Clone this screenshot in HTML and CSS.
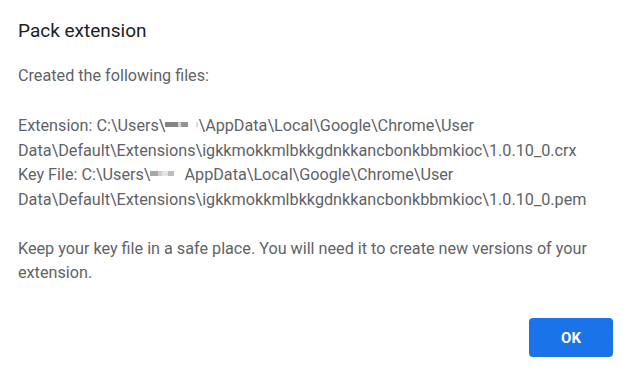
FILE: index.html
```html
<!DOCTYPE html>
<html>
<head>
<meta charset="utf-8">
<link rel="stylesheet" href="styles.css">
</head>
<body>
<div class="dialog">
  <div class="title">Pack extension</div>
  <div class="body">
    <p class="intro">Created the following files:</p>
    <p class="files">Extension: C:\Users\<span class="redact r1"></span><span class="redact r2"></span>\AppData\Local\Google\Chrome\User Data\Default\Extensions\igkkmokkmlbkkgdnkkancbonkbbmkioc\1.0.10_0.crx<br>Key File: C:\Users\<span class="redact r3"></span><span class="redact r4"></span>AppData\Local\Google\Chrome\User Data\Default\Extensions\igkkmokkmlbkkgdnkkancbonkbbmkioc\1.0.10_0.pem</p>
    <p class="note">Keep your key file in a safe place. You will need it to create new versions of your extension.</p>
  </div>
  <div class="actions">
    <button class="ok">OK</button>
  </div>
</div>
</body>
</html>
```
FILE: styles.css
```css
html, body {
  margin: 0;
  padding: 0;
  background: #ffffff;
}
.dialog {
  width: 625px;
  height: 371px;
  box-sizing: border-box;
  padding: 19px 12px 14px 18px;
  font-family: Roboto, "Liberation Sans", sans-serif;
  display: flex;
  flex-direction: column;
}
.title {
  font-size: 19px;
  color: #202124;
  line-height: 24px;
}
.body {
  margin-top: 21px;
  font-size: 16.2px;
  line-height: 24.4px;
  color: #5f6368;
  padding-right: 12px;
}
.body p {
  margin: 0;
}
.intro {
  margin-bottom: 26px !important;
}
.files {
  margin-bottom: 25px !important;
}
.redact {
  display: inline-block;
  height: 5px;
  vertical-align: 4px;
}
.r1 { width: 23px; background: linear-gradient(90deg, #858585 0 55%, #d5d5d5 55% 68%, #959595 68%); }
.r2 { width: 10px; background: linear-gradient(90deg, transparent 0 80%, #dcdcdc 80%); }
.r3 { width: 30px; background: linear-gradient(90deg, #a8a8a8 0 25%, #cfcfcf 25% 40%, #e4e4e4 40% 60%, #bdbdbd 60% 80%, transparent 80%); }
.r4 { width: 4px; background: transparent; }
.actions {
  display: flex;
  justify-content: flex-end;
  margin-top: auto;
}
.ok {
  width: 84px;
  height: 39px;
  border: none;
  border-radius: 4px;
  background: #1a73e8;
  color: #ffffff;
  font-family: Roboto, "Liberation Sans", sans-serif;
  font-weight: bold;
  font-size: 15px;
  padding: 0;
}
```
